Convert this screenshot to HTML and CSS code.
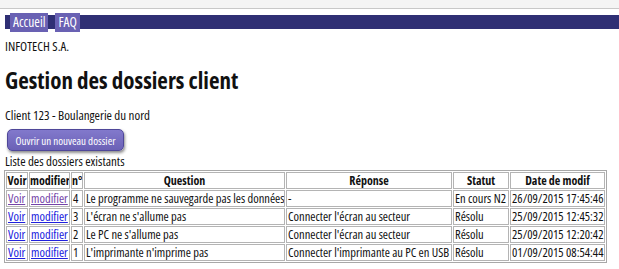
FILE: index.html
```html
<!DOCTYPE html>
<html lang="fr">
<head>
    <meta charset="UTF-8">
    <title>Gestion des dossiers client</title>
    <link rel="stylesheet" href="styles.css">
</head>
<body>
    <div class="chrome"></div>
    <nav class="menu">
        <a href="#">Accueil</a>
        <a href="#">FAQ</a>
    </nav>

    <div class="page">
        <p class="company">INFOTECH S.A.</p>
        <h1>Gestion des dossiers client</h1>
        <p class="client">Client 123 - Boulangerie du nord</p>
        <button type="button" class="btn">Ouvrir un nouveau dossier</button>
        <p class="list-title">Liste des dossiers existants</p>

        <table class="dossiers">
            <tr>
                <th class="col-voir">Voir</th>
                <th class="col-modif">modifier</th>
                <th class="col-num">n°</th>
                <th class="col-question">Question</th>
                <th class="col-reponse">Réponse</th>
                <th class="col-statut">Statut</th>
                <th class="col-date">Date de modif</th>
            </tr>
            <tr>
                <td><a class="visited" href="#">Voir</a></td>
                <td><a class="visited" href="#">modifier</a></td>
                <td>4</td>
                <td>Le programme ne sauvegarde pas les données</td>
                <td>-</td>
                <td>En cours N2</td>
                <td>26/09/2015 17:45:46</td>
            </tr>
            <tr>
                <td><a href="#">Voir</a></td>
                <td><a href="#">modifier</a></td>
                <td>3</td>
                <td>L'écran ne s'allume pas</td>
                <td>Connecter l'écran au secteur</td>
                <td>Résolu</td>
                <td>25/09/2015 12:45:32</td>
            </tr>
            <tr>
                <td><a href="#">Voir</a></td>
                <td><a href="#">modifier</a></td>
                <td>2</td>
                <td>Le PC ne s'allume pas</td>
                <td>Connecter l'écran au secteur</td>
                <td>Résolu</td>
                <td>25/09/2015 12:20:42</td>
            </tr>
            <tr>
                <td><a href="#">Voir</a></td>
                <td><a href="#">modifier</a></td>
                <td>1</td>
                <td>L'imprimante n'imprime pas</td>
                <td>Connecter l'imprimante au PC en USB</td>
                <td>Résolu</td>
                <td>01/09/2015 08:54:44</td>
            </tr>
        </table>
    </div>
</body>
</html>
```

FILE: styles.css
```css
body {
    font-family: "Open Sans", sans-serif;
    font-size: 13px;
    font-stretch: 75%;
    margin: 0;
    padding: 0;
    background-color: white;
    color: #111;
}
.chrome {
    height: 8px;
    background-color: #f4f4f4;
    border-bottom: 1px solid #c8c8c8;
}
.menu {
    margin: 6px 0 0 5px;
    height: 14px;
    background-color: #2f2f74;
    display: flex;
    gap: 7px;
    padding-left: 5px;
    align-items: center;
}
.menu a {
    display: block;
    background-color: #6961b3;
    color: white;
    text-decoration: none;
    padding: 0 3px;
    height: 19px;
    line-height: 19px;
    font-size: 13.5px;
}
.page {
    padding: 0 5px;
}
p {
    margin: 0;
}
.company {
    margin-top: 10px;
    line-height: 14px;
}
h1 {
    font-size: 23px;
    margin: 13px 0 0 0;
    line-height: 28px;
}
.client {
    margin-top: 14px;
    line-height: 14px;
}
.btn {
    display: block;
    margin: 7px 0 0 2px;
    width: 117px;
    height: 22px;
    border: 1px solid #4f4799;
    border-radius: 5px;
    background: linear-gradient(#8279cc, #6b61b6);
    color: white;
    font-family: "Open Sans", sans-serif;
    font-stretch: 75%;
    font-size: 11px;
    white-space: nowrap;
    box-shadow: 1px 2px 3px rgba(0,0,0,0.45);
    padding: 0;
}
.list-title {
    margin-top: 3px;
    line-height: 14px;
}
.dossiers {
    width: 603px;
    margin: 2px 0 0 -1px;
    table-layout: fixed;
    border: 1px solid #a8a8a8;
    border-spacing: 1px;
    font-size: 12.5px;
}
.dossiers th,
.dossiers td {
    box-sizing: border-box;
    border: 1px solid #b4b4b4;
    padding: 0 1px;
    height: 17px;
    line-height: 15px;
    white-space: nowrap;
    overflow: hidden;
    text-align: left;
}
.dossiers th {
    text-align: center;
    font-size: 12px;
    padding: 0;
}
.col-voir { width: 22px; }
.col-modif { width: 41px; }
.col-num { width: 12px; }
.col-question { width: 201px; }
.col-reponse { width: 166px; }
.col-statut { width: 56px; }
.col-date { width: 95px; }
a {
    color: #2020dd;
}
a.visited {
    color: #7444a8;
}
```
